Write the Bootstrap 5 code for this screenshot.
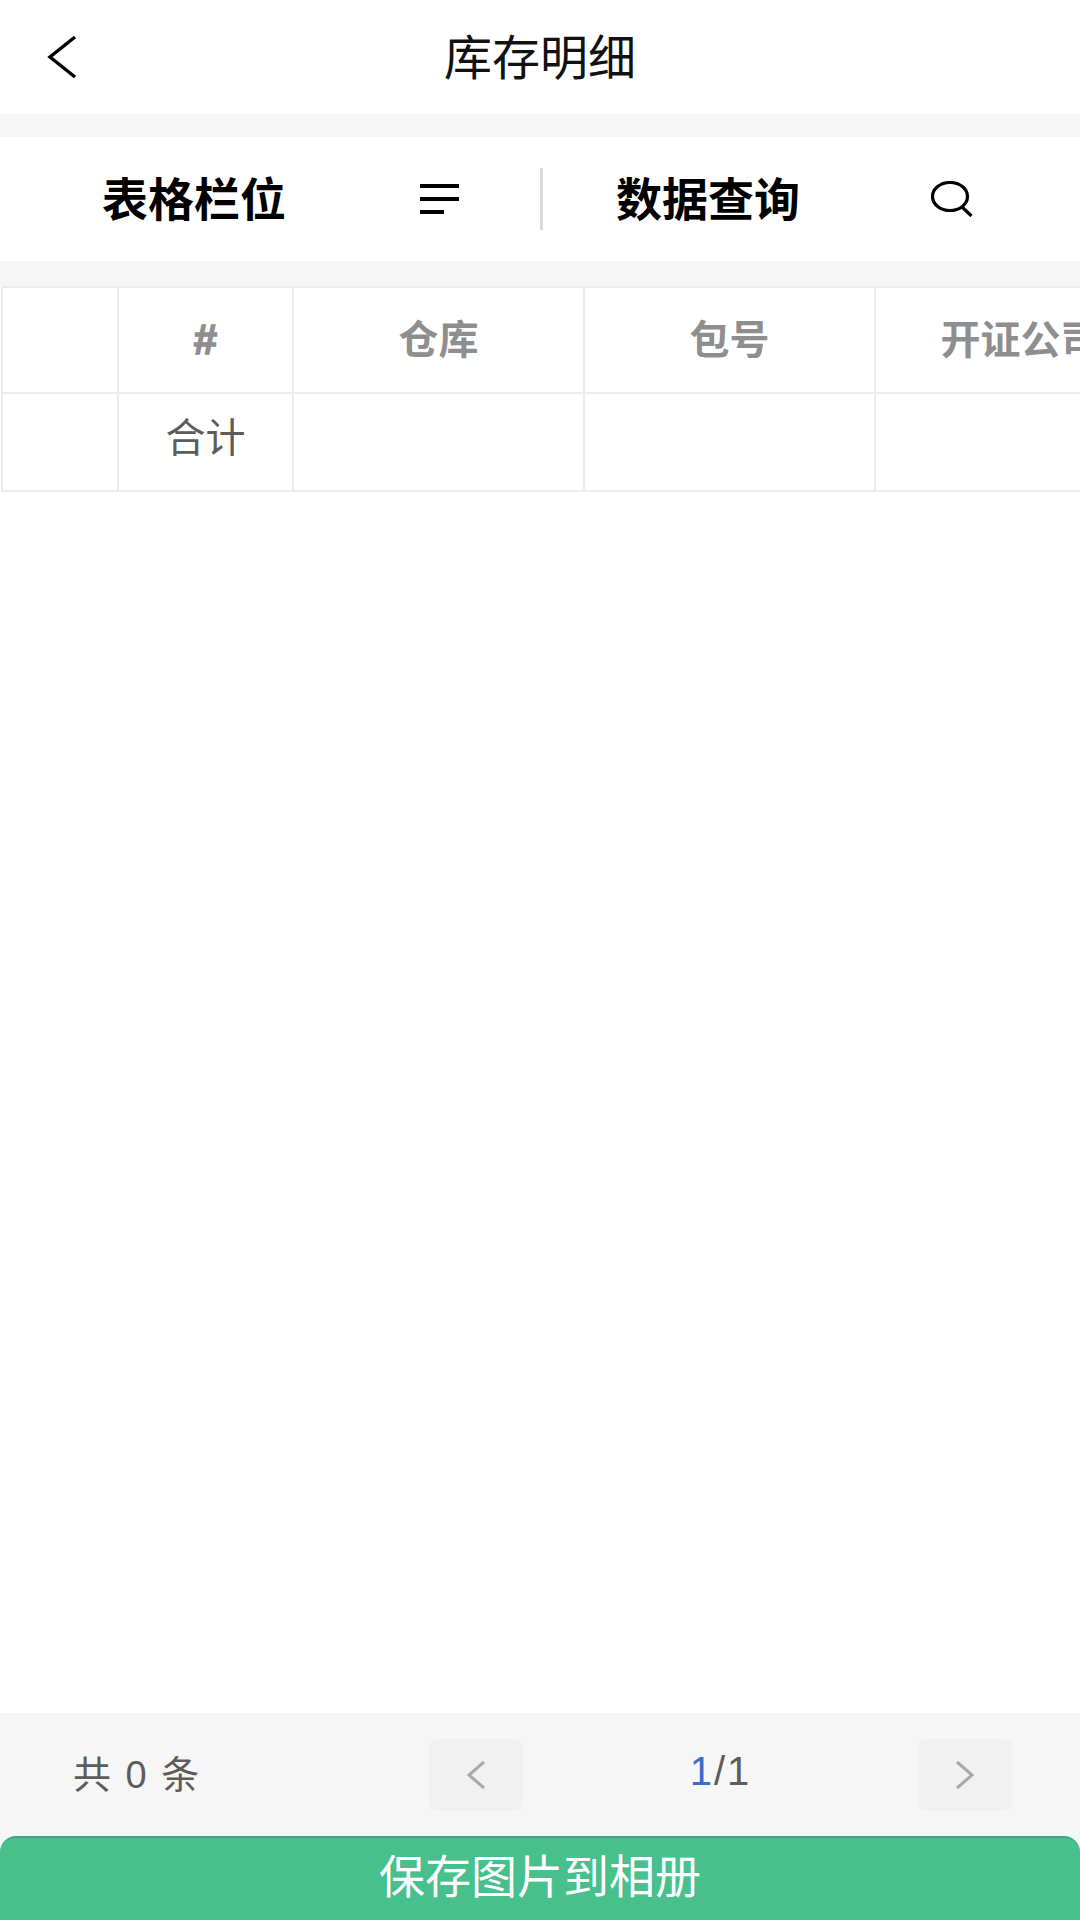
<!DOCTYPE html>
<html lang="zh-CN">
<head>
  <meta charset="UTF-8">
  <meta name="viewport" content="width=device-width, initial-scale=1">
  <title>库存明细</title>
  <link href="https://cdn.jsdelivr.net/npm/bootstrap@5.3.3/dist/css/bootstrap.min.css" rel="stylesheet">
  <style>
    body { font-family: "Liberation Sans", "Noto Sans CJK SC", sans-serif; background: #f6f6f6; width: 1080px; height: 1920px; overflow: hidden; }
    .page-wrap { height: 1920px; }
    .top-head { height: 114px; background: #fff; display: grid; grid-template-columns: 1fr auto 1fr; align-items: center; font-size: 48px; line-height: 1; color: #111; }
    .top-head .head-title { padding-top: 4px; }
    .top-head svg { margin-left: 47px; display: block; }
    .tool-row { height: 124px; background: #fff; margin-top: 23px; }
    .tool-left { width: 540px; flex: none; }
    .tool-right { flex-grow: 1; }
    .tool-title { font-size: 46px; font-weight: 700; color: #000; line-height: 1; padding-top: 2px; }
    .tool-left .tool-title { margin-left: 54px; }
    .tool-right .tool-title { margin-left: 73px; }
    .tool-sep { width: 3px; height: 62px; background: #dcdcdc; flex: none; }
    .ico-menu { margin-left: 134px; }
    .ico-search { margin-left: 131px; }
    .grid-wrap { background: #fff; margin-top: 25px; flex-grow: 1; overflow: hidden; padding-left: 1px; }
    .stock-tbl { table-layout: fixed; width: 1166px; border-collapse: collapse; margin: 0; border-top: 2px solid #e9e9e9; }
    .stock-tbl th, .stock-tbl td { border: 2px solid #ececec; text-align: center; vertical-align: middle; line-height: 1; white-space: nowrap; background: #fff; }
    .stock-tbl th { height: 106px; font-size: 40px; font-weight: 700; color: #8e8e8e; padding: 0; }
    .stock-tbl th.hash-cell { font-size: 42px; -webkit-text-stroke: 1.5px #8e8e8e; }
    .stock-tbl td { height: 98px; font-size: 40px; font-weight: 400; color: #5c5c5c; padding: 0 0 9px; }
    .col-blank { width: 116px; }
    .col-idx { width: 175px; }
    .col-wide { width: 291px; }
    .foot-row { height: 123px; background: #f6f6f6; }
    .count-text { width: 429px; padding-left: 73px; font-size: 38px; letter-spacing: 2px; color: #5c5c5c; line-height: 1; }
    .pg-btn { width: 94px; height: 72px; background: #f1f1f1; border-radius: 8px; flex: none; }
    .pg-num { flex-grow: 1; font-size: 40px; color: #5c5c5c; line-height: 1; letter-spacing: 2px; padding-bottom: 8px; }
    .pg-cur { color: #3a6cc8; }
    .pg-end { width: 68px; flex: none; }
    .save-btn { height: 84px; width: 100%; background: #48c08d; border: 0; border-top: 2px solid #3ea87b; border-radius: 16px 16px 0 0; color: #fff; font-size: 46px; line-height: 1; padding: 0 0 4px; }
  </style>
</head>

<body>
<div class="page-wrap d-flex flex-column">
  <div class="top-head">
    <svg width="30" height="44" viewBox="0 0 30 44"><path d="M28 2 3 22l25 20" fill="none" stroke="#000" stroke-width="3.4"/></svg>
    <div class="head-title">库存明细</div>
    <div></div>
  </div>

  <div class="tool-row d-flex align-items-center">
    <div class="tool-left d-flex align-items-center ps-5">
      <span class="tool-title">表格栏位</span>
      <svg class="ico-menu" width="39" height="30" viewBox="0 0 39 30"><path d="M0 2h39M0 15h39M0 28h24" stroke="#000" stroke-width="4" fill="none"/></svg>
    </div>
    <div class="tool-sep"></div>
    <div class="tool-right d-flex align-items-center">
      <span class="tool-title">数据查询</span>
      <svg class="ico-search" width="42" height="36" viewBox="0 0 42 36"><ellipse cx="19" cy="15.500" rx="17.500" ry="14" fill="none" stroke="#000" stroke-width="3.200"/><path d="m31 26 9.500 9" stroke="#000" stroke-width="3.200" fill="none"/></svg>
    </div>
  </div>

  <div class="grid-wrap">
    <table class="table stock-tbl">
      <colgroup>
        <col class="col-blank"><col class="col-idx"><col class="col-wide"><col class="col-wide"><col class="col-wide">
      </colgroup>
      <thead>
        <tr><th></th><th class="hash-cell">#</th><th>仓库</th><th>包号</th><th>开证公司</th></tr>
      </thead>
      <tbody>
        <tr><td></td><td>合计</td><td></td><td></td><td></td></tr>
      </tbody>
    </table>
  </div>

  <div class="foot-row d-flex align-items-center">
    <div class="count-text">共 0 条</div>
    <div class="pg-btn d-flex align-items-center justify-content-center">
      <svg width="20" height="30" viewBox="0 0 20 30"><path d="M18 2 3 15l15 13" fill="none" stroke="#a9a9a9" stroke-width="3"/></svg>
    </div>
    <div class="pg-num text-center"><span class="pg-cur">1</span>/1</div>
    <div class="pg-btn d-flex align-items-center justify-content-center">
      <svg width="20" height="30" viewBox="0 0 20 30"><path d="M2 2l15 13L2 28" fill="none" stroke="#a9a9a9" stroke-width="3"/></svg>
    </div>
    <div class="pg-end"></div>
  </div>
  <button type="button" class="btn save-btn">保存图片到相册</button>
</div>
<script src="https://cdn.jsdelivr.net/npm/bootstrap@5.3.3/dist/js/bootstrap.bundle.min.js"></script>
</body>
</html>
